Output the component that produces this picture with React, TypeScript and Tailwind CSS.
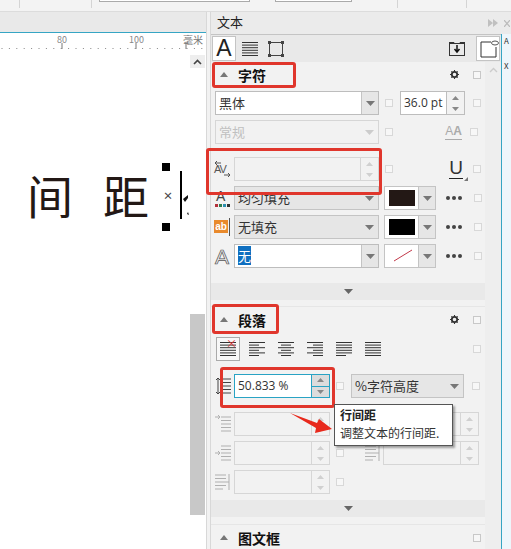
import type { ReactNode } from 'react'

const GLYPH_COLOR = '#231815'

function Check({ dim }: { dim?: boolean }) {
  return <div className={`w-[8px] h-[8px] border shrink-0 bg-[#f7f7f7] ${dim ? 'border-[#d8d8d8]' : 'border-[#c8c8c8]'}`} />
}

function Caret({ light }: { light?: boolean }) {
  return (
    <svg width="9" height="5" viewBox="0 0 9 5">
      <path d="M0 0h9L4.500 5z" fill={light ? '#cccccc' : '#777'} />
    </svg>
  )
}

function Combo({ w, text, white, disabled, selected }: { w: number; text?: string; white?: boolean; disabled?: boolean; selected?: boolean }) {
  return (
    <div style={{ width: w }} className={`h-[24px] flex items-center shrink-0 border ${disabled ? 'border-[#d6d6d6] bg-[#f2f2f2]' : white ? 'border-[#bdbdbd] bg-white' : 'border-[#c4c4c4] bg-[#e6e6e6]'}`}>
      <div className={`flex-1 pl-[3px] text-[13px] leading-[22px] truncate ${disabled ? 'text-[#c0c0c0]' : 'text-[#333]'}`}>
        {selected ? <span className="bg-[#0f6fc0] text-white">{text}</span> : text}
      </div>
      <div className={`w-[17px] h-full flex items-center justify-center ${white ? 'bg-[#e6e6e6] border-l border-[#c4c4c4]' : ''}`}>
        <Caret light={disabled} />
      </div>
    </div>
  )
}

function Spin({ w, text, active, dim }: { w: number; text?: string; active?: boolean; dim?: boolean }) {
  const border = active ? 'border-[#29a3c4]' : dim ? 'border-[#d6d6d6]' : 'border-[#bdbdbd]'
  const arrow = dim ? '#d0d0d0' : '#888'
  return (
    <div style={{ width: w }} className={`h-[24px] flex items-center shrink-0 border ${border} ${dim ? 'bg-[#f2f2f2]' : 'bg-white'}`}>
      <div className="flex-1 pl-[3px] text-[12px] text-[#333] leading-[22px] font-['Open_Sans',sans-serif]">{text}</div>
      <div className={`w-[18px] h-full flex flex-col border-l ${border} ${active ? 'bg-[#dcdcdc]' : dim ? '' : 'bg-[#f2f2f2]'}`}>
        <div className={`flex-1 flex items-center justify-center ${active ? `border-b ${border}` : ''}`}>
          <svg width="7" height="4" viewBox="0 0 7 4"><path d="M0 4L3.500 0 7 4z" fill={arrow} /></svg>
        </div>
        <div className="flex-1 flex items-center justify-center">
          <svg width="7" height="4" viewBox="0 0 7 4"><path d="M0 0h7L3.500 4z" fill={arrow} /></svg>
        </div>
      </div>
    </div>
  )
}

function Swatch({ color, slash }: { color?: string; slash?: boolean }) {
  return (
    <div className="w-[52px] h-[24px] flex border border-[#c4c4c4] shrink-0 ml-[5px]">
      <div className="w-[33px] bg-white flex items-center justify-center">
        {slash ? (
          <svg width="26" height="16" viewBox="0 0 26 16"><path d="M5 13L23 2" stroke="#c2394a" strokeWidth="1" /></svg>
        ) : (
          <div className="w-[26px] h-[16px]" style={{ background: color }} />
        )}
      </div>
      <div className="flex-1 bg-[#e6e6e6] border-l border-[#c4c4c4] flex items-center justify-center">
        <Caret />
      </div>
    </div>
  )
}

function Dots() {
  return (
    <div className="w-[16px] ml-[10px] flex justify-between shrink-0">
      <div className="w-[4px] h-[4px] rounded-full bg-[#444]" />
      <div className="w-[4px] h-[4px] rounded-full bg-[#444]" />
      <div className="w-[4px] h-[4px] rounded-full bg-[#444]" />
    </div>
  )
}

function Gear() {
  return (
    <svg width="9" height="9" viewBox="0 0 10 10">
      <circle cx="5" cy="5" r="3" fill="none" stroke="#333" strokeWidth="2" />
      <path d="M5 0v2M5 8v2M0 5h2M8 5h2M1.500 1.500l1.200 1.200M7.300 7.300l1.200 1.200M8.500 1.500L7.300 2.700M2.700 7.300L1.500 8.500" stroke="#333" strokeWidth="1.200" />
    </svg>
  )
}

function SectionHead({ title, gear }: { title: string; gear?: boolean }) {
  return (
    <div className="flex items-center h-[25px] pl-[9px] pr-[4px]">
      <svg width="8" height="5" viewBox="0 0 8 5"><path d="M0 5L4 0l4 5z" fill="#777" /></svg>
      <div className="ml-[10px] text-[14px] font-bold text-[#111] leading-none">{title}</div>
      <div className="flex-1" />
      {gear && <Gear />}
      <div className="ml-[14px]"><Check /></div>
    </div>
  )
}

function Collapse() {
  return (
    <div className="h-[17px] bg-[#e9e9e9] flex items-center justify-center">
      <svg width="9" height="5" viewBox="0 0 9 5"><path d="M0 0h9L4.500 5z" fill="#666" /></svg>
    </div>
  )
}

function Row({ children, top = 5 }: { children: ReactNode; top?: number }) {
  return <div style={{ marginTop: top }} className="relative flex items-center h-[24px] pl-[4px]">{children}</div>
}

// lines used by the paragraph alignment buttons: [x1, x2] per row
function AlignIcon({ rows }: { rows: number[][] }) {
  return (
    <svg width="16" height="16" viewBox="0 0 16 16" className="shrink-0">
      {rows.map((r, i) => <path key={i} d={`M${r[0]} ${1.500 + i * 2.600}H${r[1]}`} stroke="#333" strokeWidth="1" />)}
    </svg>
  )
}

function LineSpacingIcon() {
  return (
    <svg width="16" height="18" viewBox="0 0 16 18" className="shrink-0">
      <path d="M7 2h9M7 5.500h9M7 9h9M7 12.500h9M7 16h9" stroke="#444" />
      <path d="M3 1v16M1 3l2-2 2 2M1 15l2 2 2-2" stroke="#444" fill="none" />
    </svg>
  )
}

function IndentIcon({ side = 'left' }: { side?: 'left' | 'first' | 'right' }) {
  const c = '#b0b0b0'
  if (side === 'right') {
    return (
      <svg width="17" height="18" viewBox="0 0 17 18" className="shrink-0">
        <path d="M0 2h11M0 5.500h11M0 9h11M0 12.500h11M0 16h8" stroke={c} />
        <path d="M14 1v16M11 9h3" stroke={c} />
      </svg>
    )
  }
  return (
    <svg width="17" height="18" viewBox="0 0 17 18" className="shrink-0">
      <path d="M6 2h10M6 5.500h10M6 9h10M6 12.500h10M6 16h10" stroke={c} />
      <path d={side === 'first' ? 'M0 2h5M3 0l2 2-2 2' : 'M0 9h5M3 7l2 2-2 2'} stroke={c} fill="none" />
    </svg>
  )
}

function Ruler() {
  const dots = []
  for (let x = 2; x < 205; x += 7.400) dots.push(<path key={x} d={`M${x} 15v1`} stroke="#888" />)
  return (
    <div className="relative h-[18px] bg-white">
      <svg width="205" height="18" className="absolute left-0 top-0">
        {dots}
        {[62, 136, 186].map(x => <path key={x} d={`M${x} 10v6`} stroke="#777" />)}
      </svg>
      <span className="absolute left-[57px] top-[1px] text-[9px] leading-[12px] text-[#888]">80</span>
      <span className="absolute left-[129px] top-[1px] text-[9px] leading-[12px] text-[#888]">100</span>
      <span className="absolute left-[183px] top-[1px] text-[10px] leading-[12px] text-[#777]">毫米</span>
    </div>
  )
}

export default function App() {
  const full = [[0, 16], [0, 16], [0, 16], [0, 16], [0, 16], [0, 16]]
  return (
    <div className="relative w-[511px] h-[549px] overflow-hidden bg-[#f2f2f2] font-['Noto_Sans_CJK_SC','Noto_Sans',sans-serif]">
      {/* top toolbar */}
      <div className="relative h-[12px] bg-[#f3f3f3] border-b border-[#dcdcdc] flex">
        <div className="w-[20px] h-[8px] border-r border-[#d4d4d4]" />
        <div className="w-[72px] h-[8px] border-r border-[#d4d4d4]" />
        <div className="ml-[7px] w-[151px] h-[2px] border-b border-x border-[#aaa] bg-white" />
        <div className="ml-[25px] w-[77px] h-[2px] border-b border-x border-[#aaa] bg-white" />
        <div className="ml-[45px] w-[1px] h-[8px] bg-[#d4d4d4]" />
        <div className="ml-[68px] w-[1px] h-[8px] bg-[#d4d4d4]" />
      </div>

      <div className="flex h-[537px]">
        {/* canvas side */}
        <div className="w-[206px] shrink-0 flex flex-col bg-white">
          <div className="h-[21px] bg-[#e9e9e9] border-b border-[#36a5c4]" />
          <Ruler />
          <div className="relative flex-1">
            <div className="absolute left-[190px] top-[4px] w-[15px] h-[13px] bg-[#eeeeee] flex items-center justify-center">
              <svg width="9" height="6" viewBox="0 0 9 6"><path d="M1 5l3.500-3.500L8 5" fill="none" stroke="#444" strokeWidth="1.600" /></svg>
            </div>
            <div className="absolute left-[190px] top-[263px] w-[15px] h-[201px] bg-[#c8c8c8]" />
            <div style={{ color: GLYPH_COLOR }} className="absolute left-[27px] top-[107px] text-[46px] leading-[72px] whitespace-nowrap">间</div>
            <div style={{ color: GLYPH_COLOR }} className="absolute left-[103px] top-[107px] text-[46px] leading-[72px] whitespace-nowrap">距</div>
            <div className="absolute left-[162px] top-[112px] w-[8px] h-[8px] bg-black" />
            <div className="absolute left-[162px] top-[172px] w-[8px] h-[8px] bg-black" />
            <div className="absolute left-[163px] top-[139px] text-[10px] leading-[12px] font-bold text-[#444]">×</div>
            <div className="absolute left-[180px] top-[120px] w-[2px] h-[48px] bg-black" />
            <svg width="8" height="24" className="absolute left-[182px] top-[141px]">
              <path d="M1 7l5-4 0 3-3 4zM6 20l1 3-2-1z" fill="#111" />
            </svg>
          </div>
        </div>
        <div className="w-[5px] shrink-0 bg-[#f2f2f2] border-x border-[#d8d8d8]" />

        {/* docker */}
        <div className="flex-1 flex flex-col min-w-0">
          <div className="h-[22px] flex items-center pl-[6px] pb-[3px] bg-[#ebebeb] relative">
            <span className="text-[13px] text-[#222] leading-none">文本</span>
            <div className="absolute left-[277px] top-[7px] flex">
              <svg width="10" height="8" viewBox="0 0 10 8"><path d="M0 0l5 4-5 4zM5 0l5 4-5 4z" fill="#c0c0c0" /></svg>
            </div>
            <svg width="6" height="7" viewBox="0 0 6 7" className="absolute left-[293px] top-[8px]">
              <path d="M0 0l6 7M6 0L0 7" stroke="#bbb" strokeWidth="1.200" />
            </svg>
          </div>

          <div className="flex flex-1 min-h-0">
            <div className="w-[291px] shrink-0 flex flex-col border-r border-[#36a5c4]">
              <div className="h-[28px] shrink-0 flex items-center bg-[#e9e9e9] border-t border-[#c4c4c4] pl-[1px] pr-[1px]">
                <div className="w-[24px] h-[25px] bg-white border border-[#c4c4c4] flex items-center justify-center text-[23px] leading-none text-[#222] font-['Liberation_Sans',sans-serif]">A</div>
                <div className="ml-[6px]"><AlignIcon rows={full} /></div>
                <svg width="16" height="16" viewBox="0 0 16 16" className="ml-[10px]">
                  <rect x="1.500" y="1.500" width="13" height="13" fill="none" stroke="#444" />
                  <path d="M0 0h3v3H0zM13 0h3v3h-3zM0 13h3v3H0zM13 13h3v3h-3z" fill="#444" />
                </svg>
                <div className="flex-1" />
                <svg width="16" height="15" viewBox="0 0 16 15" className="mr-[11px]">
                  <rect x="0.500" y="2.500" width="15" height="12" fill="none" stroke="#333" />
                  <path d="M0 1h5l1 2H0zM11 1h5v2h-6z" fill="#333" />
                  <path d="M8 4v6M5.500 8L8 11l2.500-3" stroke="#111" strokeWidth="1.500" fill="none" />
                </svg>
                <div className="w-[24px] h-[25px] bg-white border border-[#c4c4c4] relative">
                  <svg width="20" height="20" viewBox="0 0 20 20" className="absolute left-[2px] top-[1px]">
                    <path d="M2 4h10M2 4v15h15V9" fill="none" stroke="#333" />
                    <ellipse cx="16" cy="5" rx="3.500" ry="2" fill="none" stroke="#555" />
                  </svg>
                </div>
              </div>

              <div className="flex flex-1 min-h-0">
                {/* sections */}
                <div className="w-[274px] shrink-0 bg-[#f2f2f2] overflow-hidden">
                  <SectionHead title="字符" gear />
                  <Row top={4}>
                    <Combo w={164} text="黑体" white />
                    <div className="ml-[6px]"><Check dim /></div>
                    <div className="ml-[7px]"><Spin w={65} text="36.0 pt" /></div>
                    <div className="ml-[8px]"><Check dim /></div>
                  </Row>
                  <Row>
                    <Combo w={164} text="常规" disabled />
                    <div className="ml-[6px]"><Check dim /></div>
                    <div className="ml-[52px] w-[17px] h-[15px] text-[12px] leading-[12px] text-center text-[#aaa] font-['Liberation_Sans',sans-serif] border-b border-[#aaa]">A<span className="font-bold">A</span></div>
                    <div className="ml-[8px]"><Check dim /></div>
                  </Row>
                  <Row top={13}>
                    <div className="relative w-[19px] h-[24px] shrink-0">
                      <svg width="17" height="18" viewBox="0 0 17 18" className="absolute left-[-1px] top-[3px]">
                        <path d="M1 3h6M3 1L1 3l2 2M10 15h6M14 13l2 2-2 2" stroke="#555" fill="none" />
                      </svg>
                      <span className="absolute left-[-1px] top-[6px] text-[11px] leading-[12px] text-[#555] font-['Liberation_Sans',sans-serif] tracking-[-1px]">AV</span>
                    </div>
                    <Spin w={145} dim />
                    <div className="ml-[6px]"><Check dim /></div>
                    <div className="relative ml-[56px] w-[14px] h-[20px] text-[19px] leading-[18px] text-[#333] border-b-[1.500px] border-[#222] font-['Liberation_Sans',sans-serif] text-center">
                      U
                      <svg width="4" height="4" viewBox="0 0 4 4" className="absolute right-[-5px] bottom-[-3px]"><path d="M4 0v4H0z" fill="#777" /></svg>
                    </div>
                    <div className="ml-[10px]"><Check dim /></div>
                  </Row>
                  <Row>
                    <div className="relative w-[19px] h-[24px] shrink-0">
                      <span className="absolute left-[1px] top-[3px] text-[14px] leading-[14px] text-[#444] font-['Liberation_Sans',sans-serif]">A</span>
                      <div className="absolute left-0 top-[18px] flex gap-[1px]">
                        <div className="w-[3px] h-[3px] bg-[#b3303a]" />
                        <div className="w-[3px] h-[3px] bg-[#2f7f4f]" />
                        <div className="w-[3px] h-[3px] bg-[#2b8fb0]" />
                        <div className="w-[3px] h-[3px] bg-[#333]" />
                      </div>
                    </div>
                    <Combo w={145} text="均匀填充" />
                    <Swatch color="#231815" />
                    <Dots />
                    <div className="ml-[12px]"><Check dim /></div>
                  </Row>
                  <Row>
                    <div className="relative w-[19px] h-[24px] shrink-0">
                      <div className="absolute left-[-1px] top-[5px] w-[14px] h-[13px] bg-[#e98a2c] text-white text-[10px] leading-[13px] font-bold text-center font-['Liberation_Sans',sans-serif]">ab</div>
                      <div className="absolute left-[14px] top-[3px] w-[1px] h-[18px] bg-[#555]" />
                    </div>
                    <Combo w={145} text="无填充" />
                    <Swatch color="#000" />
                    <Dots />
                    <div className="ml-[12px]"><Check dim /></div>
                  </Row>
                  <Row>
                    <span className="w-[19px] shrink-0 text-[21px] leading-none text-transparent [-webkit-text-stroke:0.7px_#555] font-['Liberation_Sans',sans-serif]">A</span>
                    <Combo w={145} text="无" white selected />
                    <Swatch slash />
                    <Dots />
                    <div className="ml-[12px]"><Check dim /></div>
                  </Row>
                  <div className="mt-[15px]"><Collapse /></div>

                  <div className="mt-[6px] border-t border-[#e6e6e6]">
                    <SectionHead title="段落" gear />
                  </div>
                  <div className="flex items-center h-[24px] mt-[5px] pl-[5px] pr-[4px]">
                    <div className="w-[24px] h-[24px] border border-[#aaa] bg-[#f7f7f7] flex items-center justify-center relative">
                      <AlignIcon rows={full} />
                      <span className="absolute right-[2px] top-[-1px] text-[11px] leading-[12px] text-[#d33]">×</span>
                    </div>
                    <div className="flex gap-[13px] ml-[9px]">
                      <AlignIcon rows={[[0, 16], [0, 10], [0, 16], [0, 10], [0, 16], [0, 10]]} />
                      <AlignIcon rows={[[0, 16], [3, 13], [0, 16], [3, 13], [0, 16], [3, 13]]} />
                      <AlignIcon rows={[[0, 16], [6, 16], [0, 16], [6, 16], [0, 16], [6, 16]]} />
                      <AlignIcon rows={[[0, 16], [0, 16], [0, 16], [0, 16], [0, 16], [0, 10]]} />
                      <AlignIcon rows={full} />
                    </div>
                    <div className="flex-1" />
                    <Check dim />
                  </div>
                  <Row top={13}>
                    <span className="w-[19px] shrink-0"><LineSpacingIcon /></span>
                    <Spin w={96} text="50.833 %" active />
                    <div className="ml-[6px]"><Check dim /></div>
                    <div className="ml-[7px]"><Combo w={113} text="%字符高度" /></div>
                    <div className="ml-[8px]"><Check dim /></div>
                  </Row>
                  <Row top={14}>
                    <span className="w-[19px] shrink-0"><IndentIcon side="first" /></span>
                    <Spin w={96} dim />
                    <div className="ml-[6px]"><Check dim /></div>
                    <div className="ml-[21px]"><IndentIcon side="right" /></div>
                    <div className="ml-[1px]"><Spin w={96} dim /></div>
                    <div className="ml-[8px]"><Check dim /></div>
                  </Row>
                  <Row>
                    <span className="w-[19px] shrink-0"><IndentIcon /></span>
                    <Spin w={96} dim />
                    <div className="ml-[6px]"><Check dim /></div>
                    <div className="ml-[21px]"><IndentIcon side="right" /></div>
                    <div className="ml-[1px]"><Spin w={96} dim /></div>
                    <div className="ml-[8px]"><Check dim /></div>
                  </Row>
                  <Row>
                    <span className="w-[19px] shrink-0"><IndentIcon side="right" /></span>
                    <Spin w={96} dim />
                    <div className="ml-[6px]"><Check dim /></div>
                  </Row>
                  <div className="mt-[6px]"><Collapse /></div>
                  <div className="mt-[7px] border-t border-[#e6e6e6]">
                    <SectionHead title="图文框" />
                  </div>
                </div>

                {/* docker scroll strip */}
                <div className="flex-1 bg-[#eeeeee] pt-[5px] flex justify-center">
                  <svg width="9" height="6" viewBox="0 0 9 6"><path d="M1 5l3.500-3.500L8 5" fill="none" stroke="#ccc" strokeWidth="1.400" /></svg>
                </div>
              </div>
            </div>
            <div className="flex-1 bg-[#eef6fb] pl-[2px] pt-[1px] overflow-hidden text-[8px] leading-[12px] text-[#333]">
              A
              <div className="mt-[13px]">X</div>
            </div>
          </div>
        </div>
      </div>

      {/* red annotation boxes */}
      <div className="absolute left-[212px] top-[62px] w-[84px] h-[26px] border-[3px] border-[#e0362c] rounded-[3px]" />
      <div className="absolute left-[206px] top-[148px] w-[176px] h-[47px] border-[3px] border-[#e0362c] rounded-[3px]" />
      <div className="absolute left-[212px] top-[304px] w-[67px] h-[30px] border-[3px] border-[#e0362c] rounded-[3px]" />
      <div className="absolute left-[220px] top-[367px] w-[115px] h-[41px] border-[3px] border-[#e0362c] rounded-[3px]" />

      {/* tooltip */}
      <div className="absolute left-[334px] top-[404px] w-[119px] h-[42px] bg-white border border-[#555] shadow-[2px_2px_2px_rgba(0,0,0,0.35)] pl-[5px] pt-[1px]">
        <div className="text-[12px] leading-[18px] font-bold text-[#222]">行间距</div>
        <div className="text-[12px] leading-[18px] text-[#333] whitespace-nowrap">调整文本的行间距.</div>
      </div>

      {/* red arrow */}
      <svg width="44" height="22" viewBox="0 0 44 22" className="absolute left-[290px] top-[413px]">
        <path d="M0 0L27 10 29 6 42 16 25 20 26 15z" fill="#e8291c" />
      </svg>
    </div>
  )
}
